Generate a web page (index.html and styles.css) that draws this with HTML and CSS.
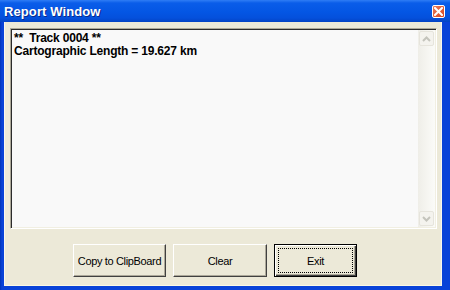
FILE: index.html
```html
<!DOCTYPE html>
<html>
<head>
<meta charset="utf-8">
<link rel="stylesheet" href="styles.css">
</head>
<body>
<div class="window">
  <div class="titlebar">
    <span class="title">Report Window</span>
    <span class="close"><svg width="9" height="9" viewBox="0 0 9 9"><path d="M1 1 L8 8 M8 1 L1 8" stroke="#fff" stroke-width="2" stroke-linecap="square"/></svg></span>
  </div>
  <div class="frame">
    <div class="client">
      <div class="report">
        <div class="report-text">**  Track 0004 **
Cartographic Length = 19.627 km</div>
        <div class="scrollbar">
          <div class="sb-btn"><svg width="9" height="6" viewBox="0 0 9 6"><path d="M1 5 L4.5 1.5 L8 5" fill="none" stroke="#c4c4bc" stroke-width="2"/></svg></div>
          <div class="sb-track"></div>
          <div class="sb-btn"><svg width="9" height="6" viewBox="0 0 9 6"><path d="M1 1 L4.5 4.5 L8 1" fill="none" stroke="#c4c4bc" stroke-width="2"/></svg></div>
        </div>
      </div>
      <div class="buttons">
        <div class="btn btn-copy">Copy to ClipBoard</div>
        <div class="btn btn-clear">Clear</div>
        <div class="btn btn-exit"><span class="focus">Exit</span></div>
      </div>
    </div>
  </div>
</div>
</body>
</html>
```
FILE: styles.css
```css
html, body {
  margin: 0;
  padding: 0;
  background: #ffffff;
}
.window {
  width: 450px;
  height: 290px;
  display: flex;
  flex-direction: column;
  background: #0842d8;
}
.titlebar {
  height: 22px;
  flex: none;
  display: flex;
  align-items: center;
  justify-content: space-between;
  padding: 0 5px 0 4px;
  background: linear-gradient(to bottom, #2f7df5 0px, #0a5de9 3px, #0456e4 12px, #0450dc 18px, #0343c4 22px);
  box-sizing: border-box;
}
.title {
  font-family: "Liberation Sans", Arial, sans-serif;
  font-weight: bold;
  font-size: 13px;
  letter-spacing: 0.1px;
  color: #ffffff;
  text-shadow: 1px 1px 0 #0a2a8a;
  padding-top: 1px;
}
.close {
  width: 13px;
  height: 13px;
  box-sizing: border-box;
  border: 1px solid #ffffff;
  border-radius: 2px;
  background: linear-gradient(to bottom right, #e87a5c, #d8461e);
  display: flex;
  align-items: center;
  justify-content: center;
}
.close svg { display: block; }
.frame {
  flex: 1;
  display: flex;
  padding: 0 8px 4px 4px;
  background: linear-gradient(to right, #0033b8 0, #0842d8 2px);
}
.client {
  flex: 1;
  display: flex;
  flex-direction: column;
  background: #ece9d8;
  padding: 6px 4px 8px 5px;
  border-left: 1px solid #f8f6ee;
  border-right: 1px solid #f8f6ee;
  border-bottom: 1px solid #fbf8e4;
}
.report {
  height: 201px;
  flex: none;
  box-sizing: border-box;
  display: flex;
  background: #f9f9f9;
  border-top: 1px solid #aca899;
  border-left: 1px solid #aca899;
  border-right: 1px solid #ffffff;
  border-bottom: 1px solid #ffffff;
  box-shadow: inset 1px 1px 0 #2b2b2b, inset -1px -1px 0 #f1efe2;
  padding: 1px;
}
.report-text {
  flex: 1;
  white-space: pre;
  font-family: "Liberation Sans", Arial, sans-serif;
  font-weight: bold;
  font-size: 12px;
  letter-spacing: -0.2px;
  line-height: 13px;
  color: #000000;
  padding: 2px 2px;
}
.scrollbar {
  width: 17px;
  flex: none;
  display: flex;
  flex-direction: column;
  background: linear-gradient(to right, #efeee8, #fbfbf8);
  padding: 1px 0;
}
.sb-btn {
  height: 15px;
  width: 15px;
  margin: 0 1px;
  box-sizing: border-box;
  border: 1px solid #e6e4dc;
  border-radius: 2px;
  background: #f4f3ee;
  display: flex;
  align-items: center;
  justify-content: center;
}
.sb-btn svg { display: block; }
.sb-track { flex: 1; }
.buttons {
  display: flex;
  gap: 7px;
  margin-top: 15px;
  padding-left: 63px;
}
.btn {
  height: 33px;
  box-sizing: border-box;
  display: flex;
  align-items: center;
  justify-content: center;
  font-family: "Liberation Sans", Arial, sans-serif;
  font-size: 11px;
  letter-spacing: -0.35px;
  color: #000000;
  background: #ece9d8;
  border-top: 1px solid #ffffff;
  border-left: 1px solid #ffffff;
  border-right: 1px solid #404040;
  border-bottom: 1px solid #404040;
  box-shadow: inset -1px -1px 0 #aca899;
}
.btn-copy { width: 93px; }
.btn-clear { width: 94px; }
.btn-exit {
  width: 83px;
  border: 1px solid #000000;
  box-shadow: inset 1px 1px 0 #ffffff, inset -1px -1px 0 #404040, inset -2px -2px 0 #aca899;
  padding: 3px;
}
.focus {
  flex: 1;
  align-self: stretch;
  display: flex;
  align-items: center;
  justify-content: center;
  border: 1px dotted #000000;
}
```
